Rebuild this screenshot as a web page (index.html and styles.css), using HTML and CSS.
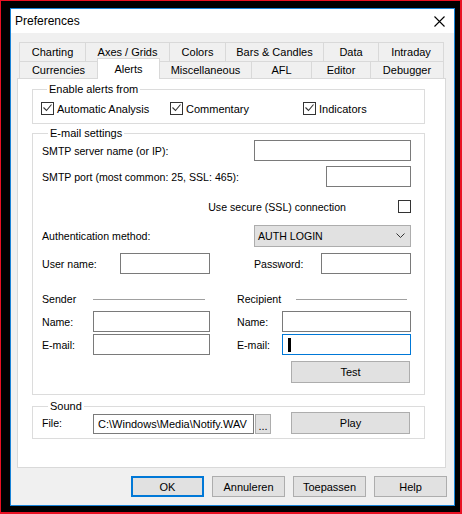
FILE: index.html
```html
<!DOCTYPE html>
<html lang="en">
<head>
    <meta charset="UTF-8">
    <title>Preferences</title>
    <link rel="stylesheet" href="styles.css">
</head>
<body>

<div class="frame">
    <div class="dialog">
        <div class="titlebar">
            <span class="title">Preferences</span>
            <svg class="close" width="11" height="11" viewBox="0 0 11 11">
                <path d="M0.5 0.5 L10.5 10.5 M10.5 0.5 L0.5 10.5" stroke="#000" stroke-width="1.1" fill="none"/>
            </svg>
        </div>

        <div class="dlg-body">
            <!-- tab strip, two rows -->
            <div class="tabs">
                <div class="tab-row back">
                    <div class="tab t-charting">Charting</div>
                    <div class="tab t-axes">Axes / Grids</div>
                    <div class="tab t-colors">Colors</div>
                    <div class="tab t-bars">Bars &amp; Candles</div>
                    <div class="tab t-data">Data</div>
                    <div class="tab t-intraday">Intraday</div>
                </div>
                <div class="tab-row front">
                    <div class="tab t-currencies">Currencies</div>
                    <div class="tab t-alerts active">Alerts</div>
                    <div class="tab t-misc">Miscellaneous</div>
                    <div class="tab t-afl">AFL</div>
                    <div class="tab t-editor">Editor</div>
                    <div class="tab t-debugger">Debugger</div>
                </div>
            </div>

            <div class="panel">
                <div class="group g-enable">
                    <div class="group-title">Enable alerts from</div>
                    <div class="check-row">
                        <label class="check">
                            <span class="box"><svg width="11" height="11" viewBox="0 0 11 11"><path d="M1.5 4.5 L4.5 7.5 L9.5 1.5" stroke="#333" stroke-width="1.1" fill="none"/></svg></span>
                            Automatic Analysis
                        </label>
                        <label class="check">
                            <span class="box"><svg width="11" height="11" viewBox="0 0 11 11"><path d="M1.5 4.5 L4.5 7.5 L9.5 1.5" stroke="#333" stroke-width="1.1" fill="none"/></svg></span>
                            Commentary
                        </label>
                        <label class="check">
                            <span class="box"><svg width="11" height="11" viewBox="0 0 11 11"><path d="M1.5 4.5 L4.5 7.5 L9.5 1.5" stroke="#333" stroke-width="1.1" fill="none"/></svg></span>
                            Indicators
                        </label>
                    </div>
                </div>

                <div class="group g-email">
                    <div class="group-title">E-mail settings</div>

                    <div class="row r-server">
                        <span>SMTP server name (or IP):</span>
                        <input class="field f-server" type="text">
                    </div>
                    <div class="row r-port">
                        <span>SMTP port (most common: 25, SSL: 465):</span>
                        <input class="field f-port" type="text">
                    </div>
                    <div class="row r-ssl">
                        <span class="ssl-label">Use secure (SSL) connection</span>
                        <span class="box"></span>
                    </div>
                    <div class="row r-auth">
                        <span>Authentication method:</span>
                        <div class="combo">
                            <span>AUTH LOGIN</span>
                            <svg width="9" height="6" viewBox="0 0 9 6"><path d="M0.5 0.5 L4.5 4.5 L8.5 0.5" stroke="#333" stroke-width="1" fill="none"/></svg>
                        </div>
                    </div>
                    <div class="row r-user">
                        <span class="lbl-user">User name:</span>
                        <input class="field f-small" type="text">
                        <span class="lbl-pass">Password:</span>
                        <input class="field f-small" type="text">
                    </div>

                    <div class="row r-heads">
                        <div class="half-l">
                            <span class="lbl-l">Sender</span>
                            <span class="rule rule-l"></span>
                        </div>
                        <div class="half-r">
                            <span class="lbl-recip">Recipient</span>
                            <span class="rule rule-r"></span>
                        </div>
                    </div>
                    <div class="row r-name">
                        <div class="half-l">
                            <span class="lbl-l">Name:</span>
                            <input class="field f-left" type="text">
                        </div>
                        <div class="half-r">
                            <span class="lbl-r">Name:</span>
                            <input class="field f-right" type="text">
                        </div>
                    </div>
                    <div class="row r-mail">
                        <div class="half-l">
                            <span class="lbl-l">E-mail:</span>
                            <input class="field f-left" type="text">
                        </div>
                        <div class="half-r">
                            <span class="lbl-r">E-mail:</span>
                            <div class="field f-right focused"><span class="caret"></span></div>
                        </div>
                    </div>
                    <div class="row r-test">
                        <button class="btn wide">Test</button>
                    </div>
                </div>

                <div class="group g-sound">
                    <div class="group-title">Sound</div>
                    <div class="row r-file">
                        <span class="lbl-l lbl-file">File:</span>
                        <input class="field f-file" type="text" value="C:\Windows\Media\Notify.WAV">
                        <button class="btn browse">...</button>
                        <button class="btn wide play">Play</button>
                    </div>
                </div>
            </div>

            <div class="buttons">
                <button class="btn dlg default">OK</button>
                <button class="btn dlg">Annuleren</button>
                <button class="btn dlg">Toepassen</button>
                <button class="btn dlg">Help</button>
            </div>
        </div>
    </div>
</div>

</body>
</html>
```

FILE: styles.css
```css
body {
    margin: 0;
    background-color: #000;
    font-family: 'Liberation Sans', Arial, sans-serif;
    font-size: 10.6px;
    color: #000;
}

.frame {
    box-sizing: border-box;
    width: 462px;
    height: 514px;
    border-style: solid;
    border-color: #e81123;
    border-width: 1px 2px 2px 1px;
    padding: 7px 5px 6px 9px;
    background-color: #000;
}

.dialog {
    box-sizing: border-box;
    width: 445px;
    height: 498px;
    border: 1px solid #1883d7;
    background-color: #f0f0f0;
}

.titlebar {
    height: 24px;
    background-color: #fff;
    display: flex;
    align-items: center;
    justify-content: space-between;
    padding: 0 9px 0 4px;
}

.title {
    font-size: 12px;
}

.close {
    display: block;
}

.dlg-body {
    padding: 9px 8px 0 6px;
}

/* tabs */
.tabs {
    margin-left: 2px;
    font-size: 11px;
}

.tab-row {
    display: flex;
}

.tab {
    box-sizing: border-box;
    border-top: 1px solid #d9d9d9;
    border-right: 1px solid #d9d9d9;
    display: flex;
    align-items: center;
    justify-content: center;
    white-space: nowrap;
}

.tab:first-child {
    border-left: 1px solid #d9d9d9;
}

.back .tab {
    height: 19px;
}

.front .tab {
    height: 17px;
}

.tab.active {
    position: relative;
    z-index: 1;
    height: 21px;
    margin: -3px 0 -1px -1px;
    border-left: 1px solid #d9d9d9;
    background-color: #fff;
}

.t-charting { width: 67px; }
.t-axes { width: 84px; }
.t-colors { width: 56px; }
.t-bars { width: 98px; }
.t-data { width: 55px; }
.t-intraday { width: 65px; }
.t-currencies { width: 79px; }
.t-alerts { width: 63px; }
.t-misc { width: 92px; }
.t-afl { width: 60px; }
.t-editor { width: 59px; }
.t-debugger { width: 73px; }

.panel {
    box-sizing: border-box;
    height: 390px;
    background-color: #fff;
    border: 1px solid #d9d9d9;
    padding: 10px 20px 0 14px;
}

/* group boxes */
.group {
    border: 1px solid #dcdcdc;
}

.group-title {
    display: table;
    margin: -8px 0 0 6px;
    padding: 0 2px;
    line-height: 14px;
    font-size: 11px;
    background-color: #fff;
}

.g-enable {
    padding: 0 0 8px 8px;
}

.g-email {
    margin-top: 9px;
    padding: 0 13px 11px 9px;
}

.g-sound {
    margin-top: 11px;
    padding: 0 13px 4px 9px;
}

.check-row {
    margin-top: 6px;
    display: grid;
    grid-template-columns: 129px 133px auto;
    height: 13px;
}

.check {
    display: flex;
    align-items: center;
    gap: 3px;
    white-space: nowrap;
    font-size: 11px;
}

.box {
    box-sizing: border-box;
    width: 13px;
    height: 13px;
    border: 1px solid #333;
    background-color: #fff;
    display: block;
    flex: none;
}

.box svg {
    display: block;
}

/* rows inside e-mail settings */
.row {
    display: flex;
    align-items: center;
    justify-content: space-between;
    white-space: nowrap;
}

.r-server { height: 21px; }
.r-port { height: 21px; margin-top: 5px; }
.r-ssl { height: 13px; margin-top: 13px; justify-content: flex-end; }
.r-auth { height: 22px; margin-top: 12px; }
.r-user { height: 21px; margin-top: 6px; justify-content: flex-start; }
.r-heads { height: 14px; margin-top: 18px; }
.r-name { height: 21px; margin-top: 5px; }
.r-mail { height: 21px; margin-top: 2px; }
.r-test { height: 22px; margin-top: 6px; justify-content: flex-end; padding-right: 1px; }

.r-file {
    height: 22px;
    margin-top: -1px;
    justify-content: flex-start;
    align-items: flex-end;
}

.ssl-label {
    margin-right: 52px;
}

.field {
    box-sizing: border-box;
    height: 21px;
    margin: 0;
    padding: 0 4px;
    border: 1px solid #7a7a7a;
    background-color: #fff;
    font: inherit;
    color: #000;
    outline: none;
}

.f-server { width: 157px; }
.f-port { width: 85px; }
.f-small { width: 90px; }
.f-left { width: 117px; }
.f-right { width: 129px; }

.f-file {
    width: 161px;
    height: 20px;
    margin-right: 1px;
    font-size: 11px;
}

.focused {
    border-color: #0078d7;
    display: flex;
    align-items: center;
}

.caret {
    width: 3px;
    height: 14px;
    margin-left: 1px;
    background-color: #000;
}

.combo {
    box-sizing: border-box;
    width: 157px;
    height: 22px;
    border: 1px solid #adadad;
    background-color: #e1e1e1;
    display: flex;
    align-items: center;
    justify-content: space-between;
    padding: 0 5px 0 3px;
}

.combo svg {
    display: block;
}

.lbl-user { width: 78px; }
.lbl-pass { width: 67px; margin-left: 44px; }
.lbl-l { width: 51px; }
.lbl-r { width: 45px; }
.lbl-recip { width: 59px; }

.lbl-file {
    align-self: center;
}

.half-l,
.half-r {
    display: flex;
    align-items: center;
}

.half-l { width: 168px; }
.half-r { width: 174px; }

.rule {
    height: 1px;
    background-color: #a0a0a0;
}

.rule-l { width: 112px; }
.rule-r { width: 111px; }

/* buttons */
.btn {
    box-sizing: border-box;
    margin: 0;
    padding: 0;
    height: 22px;
    border: 1px solid #adadad;
    background-color: #e1e1e1;
    font: inherit;
    font-size: 11px;
    color: #000;
}

.wide {
    width: 119px;
}

.browse {
    width: 16px;
    height: 20px;
    line-height: 22px;
}

.play {
    margin-left: 20px;
}

.buttons {
    display: flex;
    justify-content: flex-end;
    gap: 8px;
    margin: 8px -1px 0 0;
}

.dlg {
    width: 73px;
    height: 21px;
}

.default {
    border: 2px solid #0078d7;
}
```
